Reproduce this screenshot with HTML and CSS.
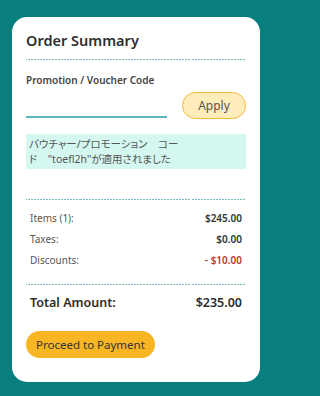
FILE: index.html
```html
<!DOCTYPE html>
<html lang="ja">
<head>
<meta charset="utf-8">
<title>Order Summary</title>
<link rel="stylesheet" href="styles.css">
</head>
<body>
<div class="card">
  <h2 class="title">Order Summary</h2>
  <div class="promo">
    <label class="promo-label" for="code">Promotion / Voucher Code</label>
    <div class="promo-row">
      <input id="code" class="promo-input" type="text">
      <button class="apply-btn" type="button">Apply</button>
    </div>
    <p class="promo-msg">バウチャー/プロモーション　コー<br>ド　"toefl2h"が適用されました</p>
  </div>
  <div class="breakdown">
    <div class="row"><span class="row-label">Items (1):</span><span class="row-value">$245.00</span></div>
    <div class="row"><span class="row-label">Taxes:</span><span class="row-value">$0.00</span></div>
    <div class="row"><span class="row-label">Discounts:</span><span class="row-value discount">- $10.00</span></div>
  </div>
  <div class="total">
    <span>Total Amount:</span><span>$235.00</span>
  </div>
  <button class="pay-btn" type="button">Proceed to Payment</button>
</div>
</body>
</html>
```
FILE: styles.css
```css
html, body {
  margin: 0;
  padding: 0;
}
html {
  background: #087e7e;
}
body {
  font-family: "Noto Sans", "Noto Sans CJK JP", sans-serif;
  color: #333;
  padding: 17px 0 14px 12px;
  width: 275px;
  height: 396px;
  box-sizing: border-box;
}
.card {
  background: #fff;
  border-radius: 15px;
  padding: 12px 14px 25px;
  width: 248px;
  height: 365px;
  box-sizing: border-box;
}
.dotted-top {
  border-top: 1px solid transparent;
  border-image: repeating-linear-gradient(90deg, #76bcbf 0 2px, transparent 2px 3px) 1;
}
.title {
  margin: 0;
  font-size: 14.5px;
  font-weight: 600;
  line-height: 22px;
  color: #2f2f2f;
  padding-bottom: 8px;
  border-bottom: 1px solid transparent;
  border-image: repeating-linear-gradient(90deg, #76bcbf 0 2px, transparent 2px 3px) 1;
}
.promo {
  padding-top: 13px;
}
.promo-label {
  display: block;
  font-size: 10px;
  font-weight: 600;
  line-height: 15px;
  color: #444;
}
.promo-row {
  display: flex;
  justify-content: space-between;
  align-items: flex-end;
  margin-top: 4px;
}
.promo-input {
  width: 141px;
  height: 20px;
  box-sizing: border-box;
  border: none;
  border-bottom: 2px solid #5cb7ba;
  margin-bottom: 1px;
  padding: 0;
  outline: none;
  background: transparent;
  font-family: inherit;
}
.apply-btn {
  width: 64px;
  height: 27px;
  border: 1.5px solid #f3b937;
  background: #ffecbb;
  border-radius: 14px;
  font-family: inherit;
  font-size: 12px;
  color: #555;
  padding: 0;
}
.promo-msg {
  margin: 15px 0 0;
  background: #d4f7f0;
  padding: 3px 3px;
  font-size: 10.5px;
  line-height: 14.5px;
  color: #555;
  font-feature-settings: "palt";
}
.breakdown {
  margin-top: 30px;
  border-top: 1px solid transparent;
  border-image: repeating-linear-gradient(90deg, #76bcbf 0 2px, transparent 2px 3px) 1;
  padding: 8px 4px 13px;
}
.row {
  display: flex;
  justify-content: space-between;
  font-size: 10px;
  line-height: 15px;
  padding: 3px 0;
}
.row-label {
  color: #555;
}
.row-value {
  font-weight: 600;
  color: #333;
}
.discount {
  color: #c0392b;
}
.total {
  border-top: 1px solid transparent;
  border-image: repeating-linear-gradient(90deg, #76bcbf 0 2px, transparent 2px 3px) 1;
  display: flex;
  justify-content: space-between;
  padding: 9px 4px 0;
  font-size: 12.5px;
  font-weight: 600;
  line-height: 18px;
  color: #2d2d2d;
}
.pay-btn {
  display: block;
  margin-top: 19px;
  height: 27px;
  padding: 0 10px;
  border: none;
  border-radius: 14px;
  background: #f8b624;
  font-family: inherit;
  font-size: 11.5px;
  color: #333;
}
```
